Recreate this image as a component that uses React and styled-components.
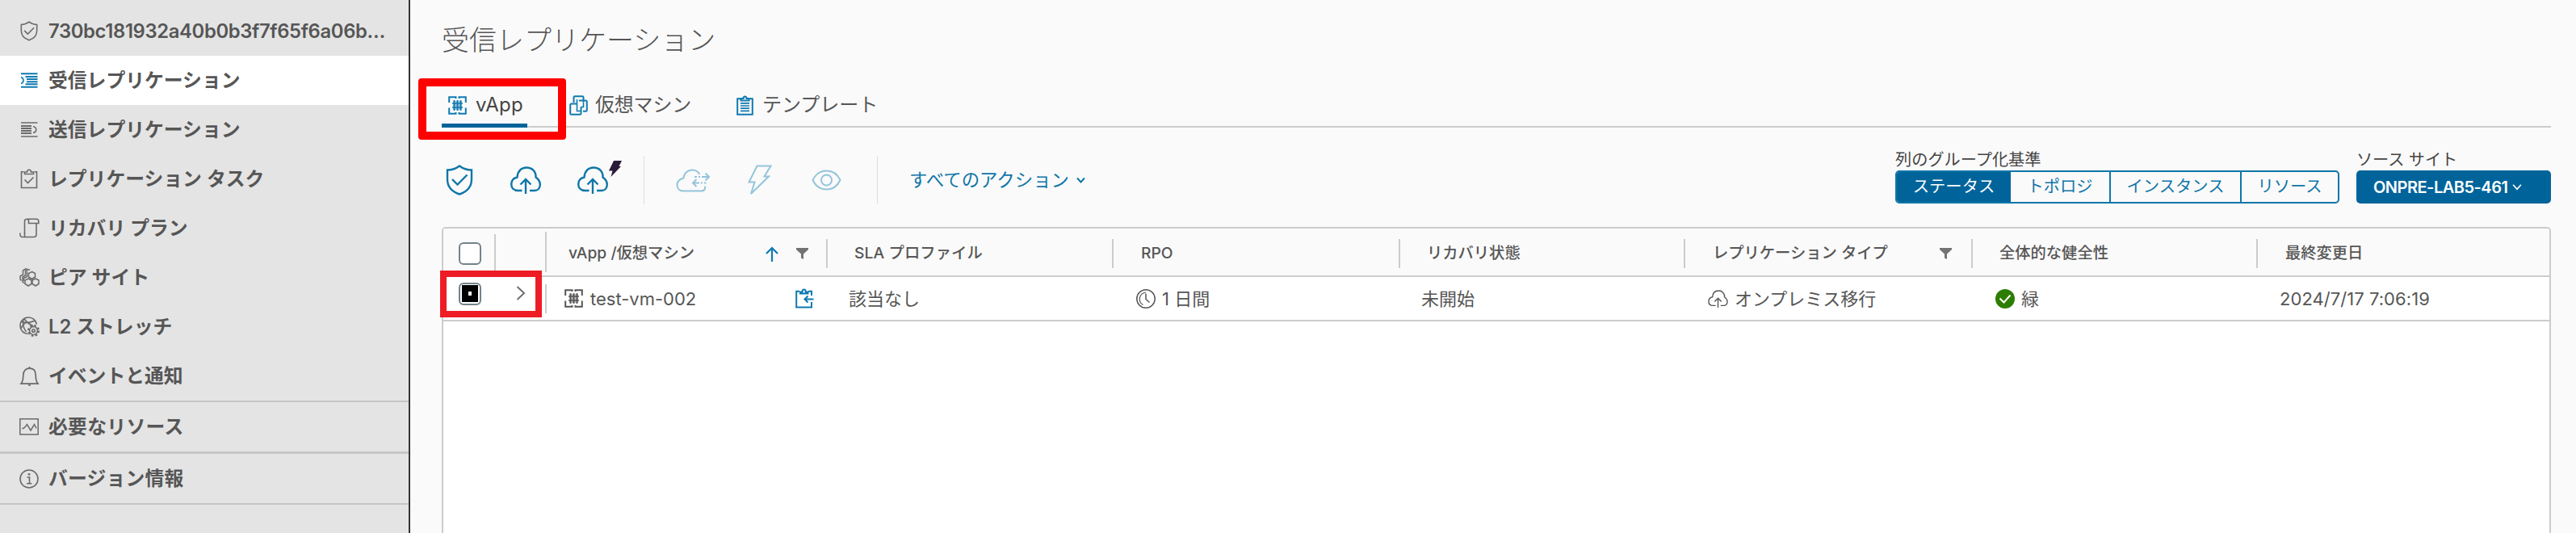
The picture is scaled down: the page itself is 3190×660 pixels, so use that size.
import React, { useState } from 'react';
import styled, { createGlobalStyle } from 'styled-components';

const GlobalStyle = createGlobalStyle`
    * {
        box-sizing: border-box;
    }
    body {
        margin: 0;
        background: #fafafa;
        color: #565656;
        font-family: Inter, "Noto Sans CJK JP", sans-serif;
        overflow: hidden;
    }
    svg {
        display: block;
        flex-shrink: 0;
        overflow: visible;
    }
`;

/* ---------- icons ---------- */

const Svg = ({ w, h, box, sw = 2, children }) => (
    <svg width={w} height={h} viewBox={box || `0 0 ${w} ${h}`} fill="none" stroke="currentColor" strokeWidth={sw}>
        {children}
    </svg>
);

const ShieldIcon = ({ w = 34, h = 38, sw = 2.4 }) => (
    <Svg w={w} h={h} box="0 0 34 38" sw={sw}>
        <path d="M17 1.500C21 4.500 26.500 6.500 32 6.500V18C32 27 26 33.500 17 36.500C8 33.500 2 27 2 18V6.500C7.500 6.500 13 4.500 17 1.500Z" />
        <path d="M8 18L14.500 24.500L26.500 12.500" />
    </Svg>
);

const cloudPath = 'M14.500 30H9.500C4 30 1.200 26.500 1.200 22C1.200 18 3.500 14.500 8.500 13.500C9 6 13.500 1.500 20 1.500C27 1.500 32 6.500 31.500 13.500C35 16 36.800 19 36.800 22.500C36.800 27 34 30 30 30H24';

const CloudUpIcon = ({ w = 38, h = 34, sw = 2.4 }) => (
    <Svg w={w} h={h} box="0 0 38 34" sw={sw}>
        <path d={cloudPath} />
        <path d="M19 34V16M12.500 22.500L19 16L25.500 22.500" />
    </Svg>
);

const CloudBoltIcon = () => (
    <Svg w={56} h={41} sw={2.4}>
        <g transform="translate(0 7)">
            <path d={cloudPath} />
            <path d="M19 34V16M12.500 22.500L19 16L25.500 22.500" />
        </g>
        <path d="M45 0H55L51.500 7H54L41.500 20L43.500 12.500H39Z" fill="#2a1a3a" stroke="none" />
    </Svg>
);

const CloudSyncIcon = () => (
    <Svg w={42} h={29}>
        <path d="M29.500 7C27.500 3.500 24.500 1.500 20.500 1.500C14.500 1.500 10 5.500 9.500 11.500C4 13 1.500 16.500 1.500 20C1.500 24.500 4.500 27.500 9 27.500H31C35 27.500 37 25.500 36 21.500" />
        <path d="M23 10H26M28 10H30M32 10H41M36.500 5.500L41 10L36.500 14.500M37.500 17.500H35M33 17.500H31M29 17.500H21M25.500 13L21 17.500L25.500 22" />
    </Svg>
);

const BoltIcon = () => (
    <Svg w={30} h={38}>
        <path d="M11.500 1.500H28.500L20.500 14.500H26L4 36L8.500 21.500H1.500Z" />
    </Svg>
);

const EyeIcon = () => (
    <Svg w={37} h={26}>
        <path d="M1.500 13C5 5.500 11 1.500 18.500 1.500C26 1.500 32 5.500 35.500 13C32 20.500 26 24.500 18.500 24.500C11 24.500 5 20.500 1.500 13Z" />
        <circle cx="18.500" cy="13" r="6.500" />
    </Svg>
);

const VAppIcon = () => (
    <Svg w={23} h={23}>
        <path d="M1.200 8V1.200H9.500V3M13.500 3V1.200H21.800V8M21.800 14.500V21.800H13.500V20M9.500 20V21.800H1.200V14.500" />
        <path d="M6 6H17V17H6Z" fill="currentColor" fillOpacity="0.4" stroke="none" />
        <path d="M7.500 5V18M11.500 5V18M15.500 5V18" strokeWidth="1.800" />
        <path d="M5 9H18M5 14H18" strokeWidth="1.500" />
    </Svg>
);

const VmIcon = () => (
    <Svg w={23} h={25}>
        <path d="M5.500 9V2.500C5.500 1.500 6 1.200 7 1.200H16C17 1.200 17.500 1.500 17.500 2.500V8.500" />
        <path d="M12 6.500H20.500C21.500 6.500 21.800 7 21.800 8V18.500C21.800 19.500 21.500 19.800 20.500 19.800H17" />
        <path d="M9.500 10.500H2.500C1.500 10.500 1.200 11 1.200 12V22.500C1.200 23.500 1.500 23.800 2.500 23.800H13C14 23.800 14.500 23.500 14.500 22.500V15" />
        <path d="M9.500 5V19.500H14M17.500 8.500V14.500H14" strokeWidth="1.600" />
    </Svg>
);

const TemplateIcon = () => (
    <Svg w={21} h={25}>
        <path d="M5 4.200H1.200V23.800H19.800V4.200H16" />
        <path d="M5.500 6.500V4H8.500C8.500 0.500 12.500 0.500 12.500 4H15.500V6.500Z" />
        <path d="M5 9.800H16M5 13H16M5 16.200H16M5 19.400H16" strokeWidth="1.700" />
    </Svg>
);

const InboundIcon = () => (
    <Svg w={22} h={19}>
        <path d="M1 1.200H21.500M1 17.800H21.500" />
        <path d="M6.500 5H21.500M8 8.100H21.500M8 11.200H21.500M6.500 14.200H21.500" />
        <path d="M1 5.500C5 7 5 12 1 13.500" strokeWidth="1.600" />
    </Svg>
);

const OutboundIcon = () => (
    <Svg w={22} h={19} sw={1.6}>
        <path d="M1 1H21.500M1 18H21.500" />
        <path d="M1 5H14M1 8H14M1 11H14M1 14H14" strokeWidth="2" />
        <path d="M16 5.500C21 6.500 21 12.500 16 13.500" strokeWidth="1.600" />
    </Svg>
);

const TaskIcon = () => (
    <Svg w={22} h={25} sw={1.6}>
        <path d="M4.500 3.800H1.500V23.500H20.500V3.800H17.500" />
        <path d="M5.500 6.500V4H8.500C8.500 0.300 13.500 0.300 13.500 4H16.500V6.500Z" />
        <path d="M5.500 13.500L9.500 17.500L16.500 10.500" />
    </Svg>
);

const PlanIcon = () => (
    <Svg w={25} h={25} sw={1.6}>
        <path d="M6.500 19V4C6.500 2 8 1.200 9.500 1.200H21C23 1.200 23.800 2.500 23.800 4V6.500H11.500V3.500C11.500 2 10.500 1.200 9.500 1.200" />
        <path d="M21 6.500V20.500C21 22.500 20 23.500 18 23.500H3.500C1.500 23.500 0.800 22 0.800 18.500M6.500 18V23.500" />
    </Svg>
);

const PeerIcon = () => (
    <Svg w={25} h={23} sw={1.5}>
        <path d="M15.500 4.500L19.500 6.500V11L15.500 13.500L11.500 11V6.500Z" />
        <path d="M11 13L15 15V19.500L11 22L7 19.500V15ZM20 13L24 15V19.500L20 22L16 19.500V15Z" />
        <path d="M13 2.500L11.500 1.500L7.500 3.500V9L4 11V17L6 18.500M10 1.500L8 0.800L4.500 3V8L1 10V14L2.500 15.500" />
        <path d="M9.500 4V10.500L5.500 12.500V16" />
    </Svg>
);

const GlobeGearIcon = () => (
    <Svg w={25} h={25} sw={1.6}>
        <path d="M10.500 21.500C5 21 1 17 1 11.200C1 5.500 5.500 1 11.200 1C16.500 1 20.500 4.500 21.300 9.500" />
        <path d="M2.500 6.500C7 8 14 7.500 19.500 5M6 2.500C8 6 13 10 17 11.500M5 3.500C3.500 9 5.500 15 8.500 19M9 7C5.500 9 3 12 2 15" />
        <circle cx="17.500" cy="17.500" r="5" />
        <circle cx="17.500" cy="17.500" r="1.800" />
        <circle cx="17.500" cy="17.500" r="6.500" strokeDasharray="2.600 2.500" strokeWidth="2" />
    </Svg>
);

const BellIcon = () => (
    <Svg w={23} h={24} sw={1.7}>
        <path d="M1 21.200H22C19.800 18.500 19.200 16 19.200 10.500C19.200 5 16 2.200 11.500 2.200C7 2.200 3.800 5 3.800 10.500C3.800 16 3.200 18.500 1 21.200Z" />
        <path d="M11.500 0V2M10 23H13" />
    </Svg>
);

const ResourceIcon = () => (
    <Svg w={24} h={21} sw={1.5}>
        <path d="M0.800 0.800H23.200V20H0.800Z" />
        <path d="M3.500 13L6.500 11.500L9.500 7.500L14 15L18.500 7.500L21 12.500" />
    </Svg>
);

const InfoIcon = () => (
    <Svg w={24} h={24} sw={1.6}>
        <circle cx="12" cy="12" r="11" />
        <path d="M9.500 10H12.500V17.500M9 17.800H15.500" />
        <circle cx="12" cy="6.300" r="1.400" fill="currentColor" stroke="none" />
    </Svg>
);

const Chevron = ({ w = 11, h = 8, sw = 2 }) => (
    <Svg w={w} h={h} box="0 0 11 8" sw={sw}>
        <path d="M1 1.500L5.500 6.500L10 1.500" />
    </Svg>
);

const ExpandIcon = () => (
    <Svg w={12} h={18} sw={2}>
        <path d="M1.500 1L10 9L1.500 17" />
    </Svg>
);

const SortIcon = () => (
    <Svg w={16} h={19} sw={2.2}>
        <path d="M8 19V2M1 9L8 2L15 9" />
    </Svg>
);

const FilterIcon = () => (
    <Svg w={15} h={14}>
        <path d="M0 0H15V2L9 7.500V14L6 12.500V7.500L0 2Z" fill="#737373" stroke="none" />
    </Svg>
);

const PasteIcon = () => (
    <Svg w={23} h={25}>
        <path d="M5 3.800H1.200V23.500H20V17M20 9V3.800H16" />
        <path d="M6 6.500V4.500H8.500C8.500 0.500 12.800 0.500 12.800 4.500H15.500V6.500Z" />
        <path d="M22.500 13.500H12M15.500 9.500L11.500 13.500L15.500 17.500" />
    </Svg>
);

const ClockIcon = () => (
    <Svg w={24} h={24} sw={1.5}>
        <circle cx="12" cy="12" r="11.200" />
        <path d="M12 5.500V12.500L16.500 16.500" />
        <path d="M8.500 19.500C1.500 15.500 3.500 5 12 4" strokeWidth="1.200" />
    </Svg>
);

const OkIcon = () => (
    <Svg w={24} h={24} sw={2}>
        <circle cx="12" cy="12" r="12" fill="#2d7d00" stroke="none" />
        <path d="M5.500 11.500L10.500 16.500L18.500 7.500" stroke="#fff" />
    </Svg>
);

/* ---------- layout ---------- */

const Page = styled.div`
    display: flex;
    height: 660px;
    overflow: hidden;
`;

const Sidebar = styled.nav`
    width: 508px;
    flex-shrink: 0;
    padding-top: 8px;
    background: #e4e4e4;
    border-right: 2px solid #333333;
`;

const NavItem = styled.div`
    display: flex;
    align-items: center;
    height: 61px;
    padding-left: 24px;
    font-size: 23.8px;
    font-weight: 600;
    line-height: 1;
    white-space: nowrap;
    background: ${(p) => (p.$active ? '#ffffff' : 'transparent')};
`;

const NavIcon = styled.span`
    display: flex;
    justify-content: center;
    width: 24px;
    margin-right: 12px;
    color: ${(p) => (p.$active ? '#0f7ab0' : '#6a6a6a')};
`;

const NavLabel = styled.span`
    letter-spacing: ${(p) => p.$spacing || 0}px;
`;

const NavDivider = styled.div`
    height: ${(p) => p.$height || 2}px;
    background: #c6c6c6;
`;

const Main = styled.main`
    flex: 1;
    display: flex;
    flex-direction: column;
    padding: 0 31px 0 39px;
`;

const Title = styled.h1`
    margin: 0;
    height: 100px;
    font-size: 34px;
    font-weight: 300;
    line-height: 100px;
`;

const Tabs = styled.div`
    display: flex;
    flex-shrink: 0;
    height: 58px;
    border-bottom: 2px solid #cccccc;
`;

const Tab = styled.button`
    display: flex;
    align-items: center;
    gap: ${(p) => p.$gap || 11}px;
    height: 58px;
    margin: 0 ${(p) => p.$after || 0}px 0 0;
    padding: 7px 5px 0 8px;
    border: 0;
    border-bottom: 5px solid ${(p) => (p.$active ? '#00649b' : 'transparent')};
    background: none;
    color: ${(p) => (p.$active ? '#454545' : '#565656')};
    font: 400 24px/1 Inter, "Noto Sans CJK JP", sans-serif;
    letter-spacing: ${(p) => p.$spacing || 0}px;
    svg {
        color: #0f7ab0;
    }
`;

const Toolbar = styled.div`
    display: flex;
    flex-shrink: 0;
    height: 123px;
    padding-top: 25px;
`;

const Actions = styled.div`
    display: flex;
    align-items: center;
    height: 60px;
    margin-top: 10px;
`;

const Action = styled.button`
    display: flex;
    align-items: center;
    gap: 9px;
    margin: 0 0 ${(p) => p.$lift || 0}px ${(p) => p.$gap}px;
    padding: 0;
    border: 0;
    background: none;
    color: ${(p) => (p.disabled ? '#94c4dc' : '#0f76a8')};
    font: 400 22.400px/1 Inter, "Noto Sans CJK JP", sans-serif;
`;

const Rule = styled.span`
    width: 1px;
    height: 60px;
    margin-left: ${(p) => p.$gap}px;
    background: #dedede;
`;

const Controls = styled.div`
    display: flex;
    gap: 21px;
    margin-left: auto;
`;

const Field = styled.div`
    display: flex;
    flex-direction: column;
    color: #454545;
`;

const FieldLabel = styled.span`
    height: 28px;
    font-size: 20.2px;
    line-height: 30px;
    letter-spacing: ${(p) => p.$spacing || 0}px;
`;

const Segments = styled.div`
    display: flex;
    height: 41px;
    border: 2px solid #0f76a8;
    border-radius: 5px;
    overflow: hidden;
`;

const Segment = styled.button`
    width: ${(p) => p.$width}px;
    padding: 0;
    border: 0;
    border-left: ${(p) => (p.$divided ? '2px solid #0f76a8' : '0')};
    background: ${(p) => (p.$active ? '#00649b' : 'transparent')};
    color: ${(p) => (p.$active ? '#ffffff' : '#0f76a8')};
    font: 400 20.300px/1 Inter, "Noto Sans CJK JP", sans-serif;
`;

const SiteButton = styled.button`
    display: flex;
    align-items: center;
    gap: 6px;
    width: 241px;
    height: 41px;
    padding: 0 0 0 21px;
    border: 0;
    border-radius: 5px;
    background: #00649b;
    color: #fff;
    font: 600 20px/1 Inter, "Noto Sans CJK JP", sans-serif;
    letter-spacing: -0.5px;
`;

const Grid = styled.div`
    flex: 1;
    min-height: 379px;
    border: 2px solid #cccccc;
    border-bottom: 0;
    border-radius: 5px 5px 0 0;
    background: #fff;
    overflow: hidden;
`;

const GridRow = styled.div`
    display: grid;
    grid-template-columns: 65px 63px 348px 354px 355px 353px 356px 353px 1fr;
    height: ${(p) => (p.$header ? 60 : 55)}px;
    border-bottom: 2px solid #cccccc;
    background: ${(p) => (p.$header ? '#fafafa' : '#ffffff')};
    font-size: ${(p) => (p.$header ? 19.3 : 22)}px;
    font-weight: ${(p) => (p.$header ? 500 : 400)};
    line-height: 1;
    white-space: nowrap;
`;

const Cell = styled.div`
    display: flex;
    align-items: center;
    gap: ${(p) => p.$gap || 8}px;
    padding: ${(p) => p.$top || 0}px 0 0 ${(p) => p.$pad || 0}px;
    letter-spacing: ${(p) => p.$spacing || 0}px;
`;

const CellTools = styled.span`
    display: flex;
    align-items: center;
    gap: 22px;
    margin-left: auto;
    margin-right: ${(p) => p.$end || 14}px;
    color: #0f7ab0;
`;

const ColumnLine = styled.span`
    width: 2px;
    height: ${(p) => p.$height || 36}px;
    margin-left: ${(p) => (p.$tight ? '0' : 'auto')};
    background: #cccccc;
`;

const CheckBox = styled.button`
    display: flex;
    align-items: center;
    justify-content: center;
    width: 28px;
    height: 28px;
    padding: 0;
    border: 2px solid #74838a;
    border-radius: 6px;
    background: #fff;
    margin-bottom: ${(p) => p.$lift || 0}px;
`;

const CheckMark = styled.span`
    width: 20px;
    height: 21px;
    border: solid #000;
    border-width: 8px;
    background: #fff;
`;

const Expander = styled.button`
    display: flex;
    padding: 0;
    margin: 0 0 14px;
    border: 0;
    background: none;
    color: #6f6f6f;
`;

// red frames drawn over the tab and the selected row
const Highlight = styled.div`
    position: absolute;
    left: ${(p) => p.$x}px;
    top: ${(p) => p.$y}px;
    width: ${(p) => p.$w}px;
    height: ${(p) => p.$h}px;
    border: ${(p) => p.$line}px solid ${(p) => p.$color};
    border-radius: ${(p) => p.$radius || 0}px;
    pointer-events: none;
`;

const navItems = [
    { label: '受信レプリケーション', icon: <InboundIcon /> },
    { label: '送信レプリケーション', icon: <OutboundIcon /> },
    { label: 'レプリケーション タスク', icon: <TaskIcon /> },
    { label: 'リカバリ プラン', icon: <PlanIcon /> },
    { label: 'ピア サイト', icon: <PeerIcon /> },
    { label: 'L2 ストレッチ', icon: <GlobeGearIcon /> },
    { label: 'イベントと通知', icon: <BellIcon /> },
];

const segments = [
    { label: 'ステータス', width: 141 },
    { label: 'トポロジ', width: 122 },
    { label: 'インスタンス', width: 162 },
    { label: 'リソース', width: 121 },
];

function App() {
    const [activeNav, setActiveNav] = useState(0);
    const [activeTab, setActiveTab] = useState('vapp');
    const [group, setGroup] = useState(0);
    const [selected, setSelected] = useState(true);

    return (
        <Page>
            <GlobalStyle />
            <Sidebar>
                <NavItem>
                    <NavIcon><ShieldIcon w={22} h={25} sw={2.4} /></NavIcon>
                    <NavLabel $spacing={-0.35}>730bc181932a40b0b3f7f65f6a06b…</NavLabel>
                </NavItem>
                {navItems.map((item, i) => (
                    <NavItem key={item.label} $active={i === activeNav} onClick={() => setActiveNav(i)}>
                        <NavIcon $active={i === activeNav}>{item.icon}</NavIcon>
                        <NavLabel>{item.label}</NavLabel>
                    </NavItem>
                ))}
                <NavDivider />
                <NavItem>
                    <NavIcon><ResourceIcon /></NavIcon>
                    <NavLabel $spacing={0.3}>必要なリソース</NavLabel>
                </NavItem>
                <NavDivider $height={3} />
                <NavItem>
                    <NavIcon><InfoIcon /></NavIcon>
                    <NavLabel $spacing={0.2}>バージョン情報</NavLabel>
                </NavItem>
                <NavDivider />
            </Sidebar>
            <Main>
                <Title>受信レプリケーション</Title>
                <Tabs>
                    <Tab $active={activeTab === 'vapp'} $after={44} $spacing={0.3} onClick={() => setActiveTab('vapp')}>
                        <VAppIcon />
                        vApp
                    </Tab>
                    <Tab $active={activeTab === 'vm'} $after={43} $gap={9} $spacing={-0.2} onClick={() => setActiveTab('vm')}>
                        <VmIcon />
                        仮想マシン
                    </Tab>
                    <Tab $active={activeTab === 'template'} onClick={() => setActiveTab('template')}>
                        <TemplateIcon />
                        テンプレート
                    </Tab>
                </Tabs>
                <Toolbar>
                    <Actions>
                        <Action $gap={5}><ShieldIcon /></Action>
                        <Action $gap={46}><CloudUpIcon /></Action>
                        <Action $gap={45} $lift={7}><CloudBoltIcon /></Action>
                        <Rule $gap={26} />
                        <Action $gap={39} disabled><CloudSyncIcon /></Action>
                        <Action $gap={47} disabled><BoltIcon /></Action>
                        <Action $gap={49} disabled><EyeIcon /></Action>
                        <Rule $gap={44} />
                        <Action $gap={39}>
                            すべてのアクション
                            <Chevron />
                        </Action>
                    </Actions>
                    <Controls>
                        <Field>
                            <FieldLabel>列のグループ化基準</FieldLabel>
                            <Segments>
                                {segments.map((s, i) => (
                                    <Segment
                                        key={s.label}
                                        $width={s.width}
                                        $divided={i > 1}
                                        $active={i === group}
                                        onClick={() => setGroup(i)}
                                    >
                                        {s.label}
                                    </Segment>
                                ))}
                            </Segments>
                        </Field>
                        <Field>
                            <FieldLabel $spacing={-0.1}>ソース サイト</FieldLabel>
                            <SiteButton>
                                ONPRE-LAB5-461
                                <Chevron w={12} h={9} sw={1.5} />
                            </SiteButton>
                        </Field>
                    </Controls>
                </Toolbar>
                <Grid>
                    <GridRow $header>
                        <Cell $pad={19} $top={4}>
                            <CheckBox />
                            <ColumnLine $height={48} />
                        </Cell>
                        <Cell><ColumnLine $height={50} /></Cell>
                        <Cell $pad={27} $top={4}>
                            vApp /仮想マシン
                            <CellTools>
                                <SortIcon />
                                <FilterIcon />
                            </CellTools>
                            <ColumnLine $tight />
                        </Cell>
                        <Cell $pad={33} $top={4} $spacing={0.1}>SLA プロファイル<ColumnLine /></Cell>
                        <Cell $pad={34} $top={4}>RPO<ColumnLine /></Cell>
                        <Cell $pad={33} $top={4}>リカバリ状態<ColumnLine /></Cell>
                        <Cell $pad={34} $top={4}>
                            レプリケーション タイプ
                            <CellTools $end={16}><FilterIcon /></CellTools>
                            <ColumnLine $tight />
                        </Cell>
                        <Cell $pad={33} $top={4}>全体的な健全性<ColumnLine /></Cell>
                        <Cell $pad={34} $top={4}>最終変更日</Cell>
                    </GridRow>
                    <GridRow>
                        <Cell $pad={19} $top={2}>
                            <CheckBox $lift={14} onClick={() => setSelected(!selected)}>
                                {selected && <CheckMark />}
                            </CheckBox>
                        </Cell>
                        <Cell $pad={25} $top={1}>
                            <Expander><ExpandIcon /></Expander>
                            <ColumnLine />
                        </Cell>
                        <Cell $pad={22} $gap={9}>
                            <VAppIcon />
                            test-vm-002
                            <CellTools $end={17}><PasteIcon /></CellTools>
                        </Cell>
                        <Cell $pad={26}>該当なし</Cell>
                        <Cell $pad={28}><ClockIcon />1 日間</Cell>
                        <Cell $pad={26}>未開始</Cell>
                        <Cell $pad={28}><CloudUpIcon w={25} h={22} sw={2.2} />オンプレミス移行</Cell>
                        <Cell $pad={28}><OkIcon />緑</Cell>
                        <Cell $pad={27} $spacing={0.05}>2024/7/17 7:06:19</Cell>
                    </GridRow>
                </Grid>
            </Main>
            <Highlight $x={518} $y={97} $w={183} $h={76} $line={10} $color="#ff0000" $radius={4} />
            <Highlight $x={545} $y={335} $w={126} $h={58} $line={8} $color="#ee1c25" />
        </Page>
    );
}

export default App;
